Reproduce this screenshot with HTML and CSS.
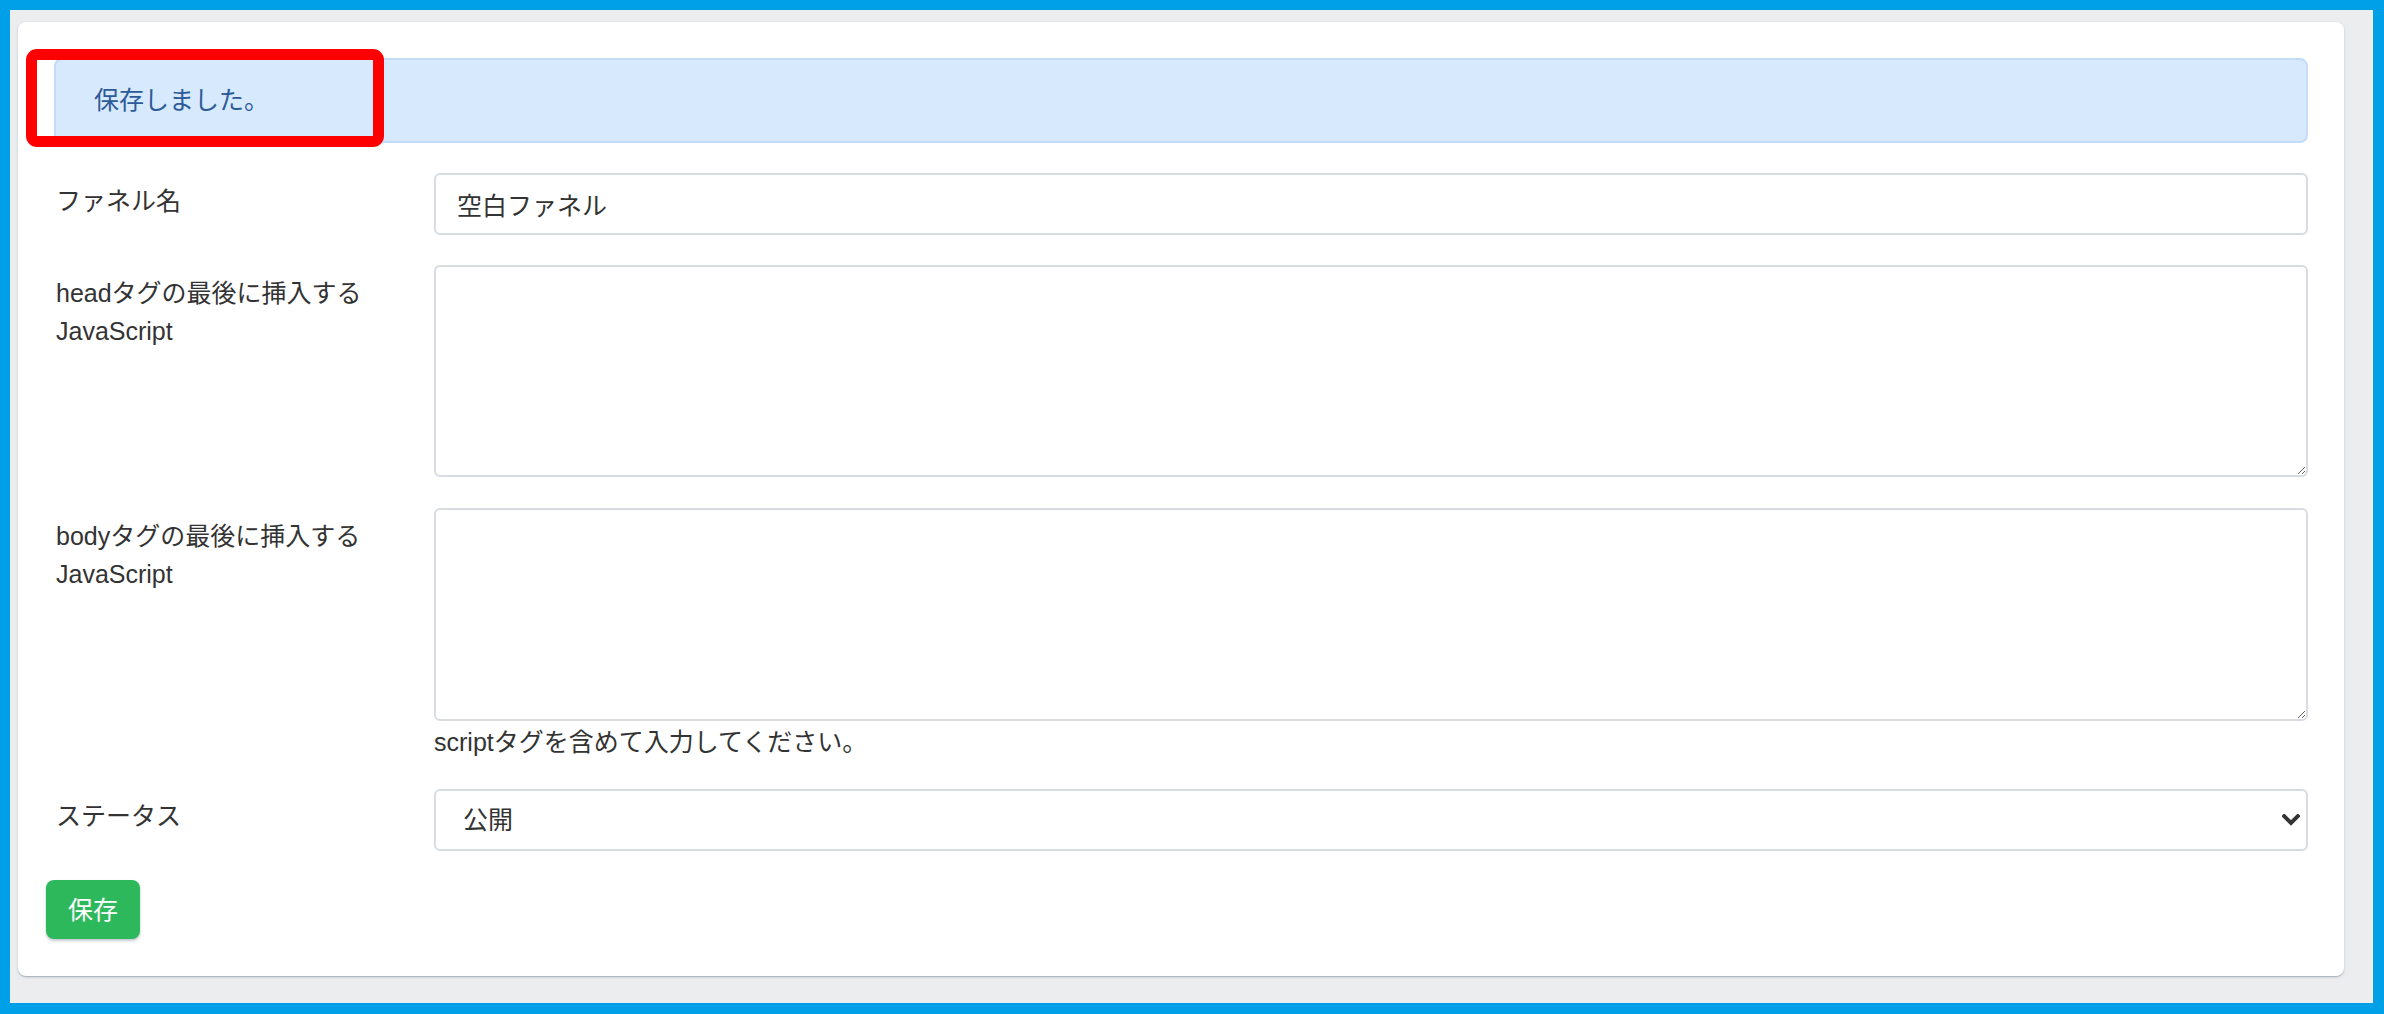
FILE: index.html
```html
<!DOCTYPE html>
<html lang="ja">
<head>
<meta charset="utf-8">
<title>ファネル編集</title>
<link rel="stylesheet" href="styles.css">
</head>
<body>
<div class="frame">
  <div class="card">
    <div class="alert">保存しました。</div>
    <form class="form">
      <div class="row row-name">
        <label class="label">ファネル名</label>
        <div class="control">
          <input class="input" type="text" value="空白ファネル">
        </div>
      </div>
      <div class="row row-head">
        <label class="label">headタグの最後に挿入する<br>JavaScript</label>
        <div class="control">
          <textarea class="textarea"></textarea>
        </div>
      </div>
      <div class="row row-body">
        <label class="label">bodyタグの最後に挿入する<br>JavaScript</label>
        <div class="control">
          <textarea class="textarea textarea-body"></textarea>
          <div class="help">scriptタグを含めて入力してください。</div>
        </div>
      </div>
      <div class="row row-status">
        <label class="label label-status">ステータス</label>
        <div class="control">
          <div class="select-wrap">
            <select class="select">
              <option>公開</option>
              <option>非公開</option>
            </select>
            <svg class="chevron" width="18" height="12" viewBox="0 0 18 12" aria-hidden="true">
              <path d="M2.2 2.2 L9 9 L15.8 2.2" fill="none" stroke="#333333" stroke-width="4" stroke-linecap="square" stroke-linejoin="miter"/>
            </svg>
          </div>
        </div>
      </div>
      <button class="btn" type="button">保存</button>
    </form>
  </div>
</div>
<div class="highlight"></div>
</body>
</html>
```

FILE: styles.css
```css
html, body {
  margin: 0;
  padding: 0;
  height: 100%;
}

body {
  background: #00a0e9;
  font-family: "Liberation Sans", "Noto Sans CJK JP", sans-serif;
  font-size: 25px;
  line-height: 38.4px;
  color: #333333;
}

.frame {
  box-sizing: border-box;
  height: calc(100% - 21px);
  margin: 10px 11px 11px 10px;
  padding: 12px 29px 0 8px;
  background: #ebedef;
}

.card {
  background: #ffffff;
  border-radius: 8px;
  padding: 36px 36px 37px 36px;
  box-shadow: 0 1px 1px 0 rgba(60, 75, 100, 0.14),
              0 2px 1px -1px rgba(60, 75, 100, 0.12),
              0 1px 3px 0 rgba(60, 75, 100, 0.2);
}

.alert {
  box-sizing: border-box;
  height: 85px;
  padding: 21.3px 38px;
  background: #d7e9fd;
  border: 2px solid #c3dcfa;
  border-radius: 8px;
  color: #2d5b98;
  margin-bottom: 30px;
}

.form {
  margin: 0;
}

.row {
  display: flex;
  align-items: flex-start;
}

.row-name { margin-bottom: 30px; }
.row-head { margin-bottom: 31px; }
.row-body { margin-bottom: 28px; }
.row-status { margin-bottom: 29px; }

.label {
  box-sizing: border-box;
  width: 380px;
  flex: 0 0 380px;
  padding-top: 9px;
  padding-left: 2px;
}

.label-status {
  padding-top: 8px;
}

.control {
  flex: 1 1 auto;
  min-width: 0;
}

.input,
.textarea,
.select {
  display: block;
  box-sizing: border-box;
  width: 100%;
  margin: 0;
  border: 2px solid #d8dbe0;
  border-radius: 6px;
  background: #ffffff;
  color: #333333;
  font-family: "Liberation Sans", "Noto Sans CJK JP", sans-serif;
  font-size: 25px;
  line-height: 38.4px;
  outline: none;
}

.input {
  height: 62px;
  padding: 0 21px;
}

.textarea {
  height: 212px;
  padding: 10px 21px;
  resize: vertical;
}

.textarea-body {
  height: 213px;
}

.help {
  margin-top: 2px;
}

.select-wrap {
  position: relative;
}

.select {
  height: 62px;
  padding: 0 40px 0 27px;
  -webkit-appearance: none;
  -moz-appearance: none;
  appearance: none;
}

.chevron {
  position: absolute;
  right: 8px;
  top: 25px;
  pointer-events: none;
}

.btn {
  display: block;
  box-sizing: border-box;
  height: 59px;
  margin-left: -8px;
  padding: 0 22px;
  border: none;
  border-radius: 8px;
  background: #2eb85c;
  color: #ffffff;
  font-family: "Liberation Sans", "Noto Sans CJK JP", sans-serif;
  font-size: 25px;
  line-height: 38.4px;
  box-shadow: 0 2px 3px rgba(60, 75, 100, 0.3);
}

.highlight {
  position: absolute;
  left: 26px;
  top: 49px;
  width: 358px;
  height: 98px;
  box-sizing: border-box;
  border: 11px solid #ff0000;
  border-radius: 11px;
  pointer-events: none;
}
```
